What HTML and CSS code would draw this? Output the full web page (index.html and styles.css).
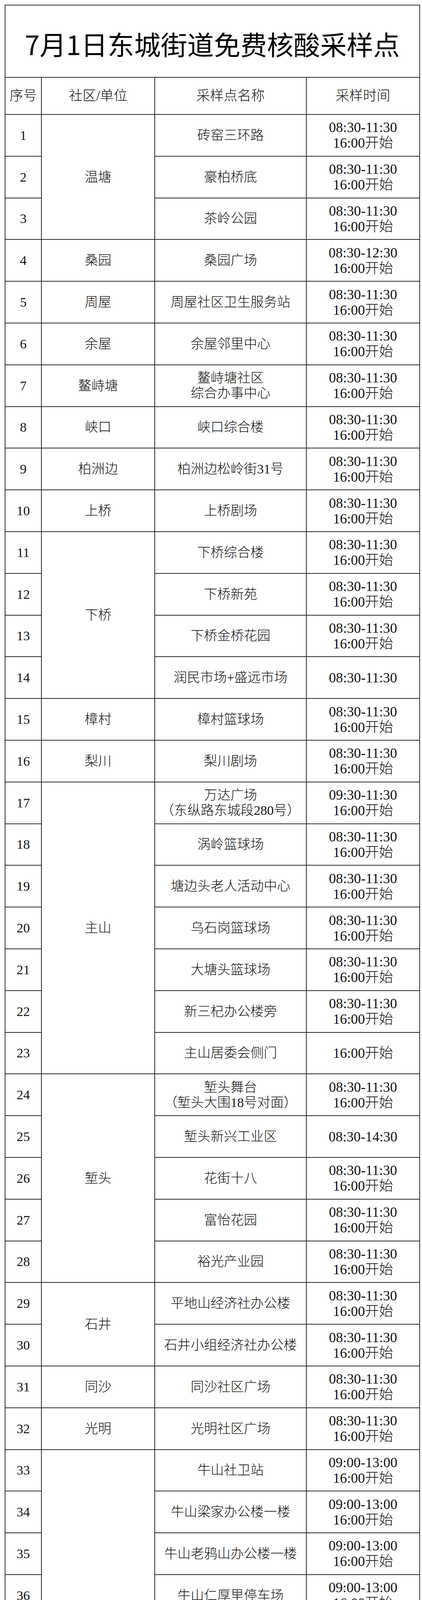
FILE: index.html
```html
<!DOCTYPE html>
<html lang="zh-CN">
<head>
<meta charset="utf-8">
<title>7月1日东城街道免费核酸采样点</title>
<link rel="stylesheet" href="styles.css">
</head>
<body>
<table class="sheet">
<colgroup><col class="c-no"><col class="c-unit"><col class="c-site"><col class="c-time"></colgroup>
<tr class="title-row"><td colspan="4" class="title">7月1日东城街道免费核酸采样点</td></tr>
<tr class="head-row"><th>序号</th><th>社区/单位</th><th>采样点名称</th><th>采样时间</th></tr>
<tr class="r"><td>1</td><td rowspan="3">温塘</td><td>砖窑三环路</td><td class="t">08:30-11:30<br>16:00开始</td></tr>
<tr class="r"><td>2</td><td>豪柏桥底</td><td class="t">08:30-11:30<br>16:00开始</td></tr>
<tr class="r"><td>3</td><td>茶岭公园</td><td class="t">08:30-11:30<br>16:00开始</td></tr>
<tr class="r"><td>4</td><td>桑园</td><td>桑园广场</td><td class="t">08:30-12:30<br>16:00开始</td></tr>
<tr class="r"><td>5</td><td>周屋</td><td>周屋社区卫生服务站</td><td class="t">08:30-11:30<br>16:00开始</td></tr>
<tr class="r"><td>6</td><td>余屋</td><td>余屋邻里中心</td><td class="t">08:30-11:30<br>16:00开始</td></tr>
<tr class="r"><td>7</td><td>鳌峙塘</td><td>鳌峙塘社区<br>综合办事中心</td><td class="t">08:30-11:30<br>16:00开始</td></tr>
<tr class="r"><td>8</td><td>峡口</td><td>峡口综合楼</td><td class="t">08:30-11:30<br>16:00开始</td></tr>
<tr class="r"><td>9</td><td>柏洲边</td><td>柏洲边松岭街31号</td><td class="t">08:30-11:30<br>16:00开始</td></tr>
<tr class="r"><td>10</td><td>上桥</td><td>上桥剧场</td><td class="t">08:30-11:30<br>16:00开始</td></tr>
<tr class="r"><td>11</td><td rowspan="4">下桥</td><td>下桥综合楼</td><td class="t">08:30-11:30<br>16:00开始</td></tr>
<tr class="r"><td>12</td><td>下桥新苑</td><td class="t">08:30-11:30<br>16:00开始</td></tr>
<tr class="r"><td>13</td><td>下桥金桥花园</td><td class="t">08:30-11:30<br>16:00开始</td></tr>
<tr class="r"><td>14</td><td>润民市场+盛远市场</td><td class="t">08:30-11:30</td></tr>
<tr class="r"><td>15</td><td>樟村</td><td>樟村篮球场</td><td class="t">08:30-11:30<br>16:00开始</td></tr>
<tr class="r"><td>16</td><td>梨川</td><td>梨川剧场</td><td class="t">08:30-11:30<br>16:00开始</td></tr>
<tr class="r"><td>17</td><td rowspan="7">主山</td><td>万达广场<br>（东纵路东城段280号）</td><td class="t">09:30-11:30<br>16:00开始</td></tr>
<tr class="r"><td>18</td><td>涡岭篮球场</td><td class="t">08:30-11:30<br>16:00开始</td></tr>
<tr class="r"><td>19</td><td>塘边头老人活动中心</td><td class="t">08:30-11:30<br>16:00开始</td></tr>
<tr class="r"><td>20</td><td>乌石岗篮球场</td><td class="t">08:30-11:30<br>16:00开始</td></tr>
<tr class="r"><td>21</td><td>大塘头篮球场</td><td class="t">08:30-11:30<br>16:00开始</td></tr>
<tr class="r"><td>22</td><td>新三杞办公楼旁</td><td class="t">08:30-11:30<br>16:00开始</td></tr>
<tr class="r"><td>23</td><td>主山居委会侧门</td><td class="t">16:00开始</td></tr>
<tr class="r"><td>24</td><td rowspan="5">堑头</td><td>堑头舞台<br>（堑头大围18号对面）</td><td class="t">08:30-11:30<br>16:00开始</td></tr>
<tr class="r"><td>25</td><td>堑头新兴工业区</td><td class="t">08:30-14:30</td></tr>
<tr class="r"><td>26</td><td>花街十八</td><td class="t">08:30-11:30<br>16:00开始</td></tr>
<tr class="r"><td>27</td><td>富怡花园</td><td class="t">08:30-11:30<br>16:00开始</td></tr>
<tr class="r"><td>28</td><td>裕光产业园</td><td class="t">08:30-11:30<br>16:00开始</td></tr>
<tr class="r"><td>29</td><td rowspan="2">石井</td><td>平地山经济社办公楼</td><td class="t">08:30-11:30<br>16:00开始</td></tr>
<tr class="r"><td>30</td><td>石井小组经济社办公楼</td><td class="t">08:30-11:30<br>16:00开始</td></tr>
<tr class="r"><td>31</td><td>同沙</td><td>同沙社区广场</td><td class="t">08:30-11:30<br>16:00开始</td></tr>
<tr class="r"><td>32</td><td>光明</td><td>光明社区广场</td><td class="t">08:30-11:30<br>16:00开始</td></tr>
<tr class="r"><td>33</td><td rowspan="8">牛山</td><td>牛山社卫站</td><td class="t">09:00-13:00<br>16:00开始</td></tr>
<tr class="r"><td>34</td><td>牛山梁家办公楼一楼</td><td class="t">09:00-13:00<br>16:00开始</td></tr>
<tr class="r"><td>35</td><td>牛山老鸦山办公楼一楼</td><td class="t">09:00-13:00<br>16:00开始</td></tr>
<tr class="r"><td>36</td><td>牛山仁厚里停车场</td><td class="t">09:00-13:00<br>16:00开始</td></tr>
<tr class="r"><td>37</td><td>牛山余庆里办公楼一楼</td><td class="t">09:00-13:00<br>16:00开始</td></tr>
<tr class="r"><td>38</td><td>牛山积善里办公楼一楼</td><td class="t">09:00-13:00<br>16:00开始</td></tr>
<tr class="r"><td>39</td><td>牛山老围办公楼一楼</td><td class="t">09:00-13:00<br>16:00开始</td></tr>
<tr class="r"><td>40</td><td>牛山文化小公园</td><td class="t">09:00-13:00<br>16:00开始</td></tr>
<tr class="r"><td>41</td><td>立新</td><td>立新九头村<br>住宅小区西门</td><td class="t">08:30-11:30<br>16:00开始</td></tr>
<tr class="r"><td>42</td><td>火炼树</td><td>火炼树社区篮球场</td><td class="t">08:30-11:30<br>16:00开始</td></tr>
<tr class="r"><td>43</td><td rowspan="7">岗贝</td><td>岗贝居委会<br>（东顺楼一楼）</td><td class="t">08:30-11:30<br>16:00开始</td></tr>
<tr class="r"><td>44</td><td>东城中心/东城山庄</td><td class="t">16:00开始</td></tr>
<tr class="r"><td>45</td><td>天骄峰景</td><td class="t">16:00开始</td></tr>
<tr class="r"><td>46</td><td>愉景花园</td><td class="t">16:00开始</td></tr>
<tr class="r"><td>47</td><td>皇马郦宫</td><td class="t">16:00开始</td></tr>
<tr class="r"><td>48</td><td>岗贝警务区</td><td class="t">08:30-11:30<br>15:00开始</td></tr>
<tr class="r"><td>49</td><td>东城文化广场</td><td class="t">08:30-11:30<br>16:00开始</td></tr>
<tr class="r"><td>50</td><td rowspan="2">花园新村</td><td>花园新村商贸广场</td><td class="t">08:30-11:30<br>16:00开始</td></tr>
<tr class="r"><td>51</td><td>花园新村社区篮球场</td><td class="t">08:30-11:30<br>16:00开始</td></tr>
<tr class="r"><td>52</td><td rowspan="5">东泰</td><td>东泰花园</td><td class="t">16:00开始</td></tr>
<tr class="r"><td>53</td><td>景湖蓝郡</td><td class="t">16:00开始</td></tr>
<tr class="r"><td>54</td><td>景湖春天</td><td class="t">16:00开始</td></tr>
<tr class="r"><td>55</td><td>卡布斯</td><td class="t">08:30-11:30</td></tr>
<tr class="r"><td>56</td><td>莞寓</td><td class="t">16:00开始</td></tr>
<tr class="r"><td>57</td><td rowspan="7">星城</td><td>星城社区综合楼</td><td class="t">08:30-11:30<br>16:00开始</td></tr>
<tr class="r"><td>58</td><td>金源花园</td><td class="t">18:00开始</td></tr>
<tr class="r"><td>59</td><td>侨苑山庄</td><td class="t">18:00开始</td></tr>
<tr class="r"><td>60</td><td>盈彩美地</td><td class="t">18:00开始</td></tr>
<tr class="r"><td>61</td><td>宝城花园</td><td class="t">18:00开始</td></tr>
<tr class="r"><td>62</td><td>万盛广场</td><td class="t">18:00开始</td></tr>
<tr class="r"><td>63</td><td>庆峰花园</td><td class="t">18:00开始</td></tr>
<tr class="r"><td>64</td><td>东城科技工业园</td><td>同沙科技工业园<br>社区卫生服务站</td><td class="t">16:00开始</td></tr>
<tr class="note-row"><td colspan="4" class="note">备注：采样结束时间视人流量情况而定，若长时间无市民前来采样，采<br>样点将结束采样服务，请市民今早参加核酸检测。</td></tr>
</table>
</body>
</html>
```
FILE: styles.css
```css
html, body {
  margin: 0;
  padding: 0;
  background: #ffffff;
}

body {
  padding: 12px 0 0 12px;
  font-family: "Liberation Serif", "Noto Sans CJK SC", serif;
  color: #111111;
}

.sheet {
  width: 1061px;
  table-layout: fixed;
  border-collapse: collapse;
  border: 2px solid #2b2b2b;
}

.c-no { width: 93px; }
.c-unit { width: 290px; }
.c-site { width: 388px; }
.c-time { width: 290px; }

.sheet td,
.sheet th {
  border: 2px solid #2b2b2b;
  padding: 0;
  text-align: center;
  vertical-align: middle;
  font-size: 34px;
  font-weight: 300;
  line-height: 39px;
  white-space: nowrap;
}

.sheet .t {
  font-size: 36px;
  line-height: 40px;
}

.title-row { height: 185px; }

.sheet .title {
  font-family: "Noto Sans CJK SC", sans-serif;
  font-size: 68px;
  font-weight: 400;
  line-height: 80px;
  padding-top: 12px;
  color: #000000;
}

.head-row { height: 95px; }

.sheet .head-row th {
  font-size: 35px;
  font-weight: 300;
}

.r { height: 106.8px; }

.note-row { height: 124px; }

.sheet .note {
  font-size: 33.5px;
  line-height: 40px;
}
```
